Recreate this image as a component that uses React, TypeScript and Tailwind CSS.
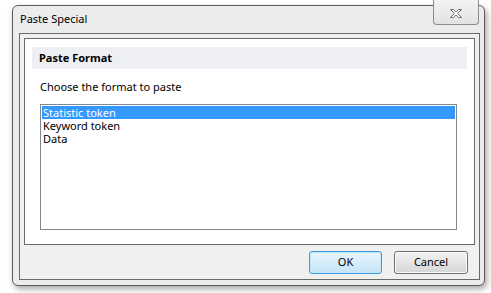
import { FC, useState } from "react";

const items = ["Statistic token", "Keyword token", "Data"];

const CloseGlyph: FC = () => (
  <svg width="14" height="11" viewBox="0 0 14 11">
    <path
      d="M1.5 1.5h3l2.5 2.5 2.5-2.5h3l-4 4 4 4h-3l-2.5-2.5-2.5 2.5h-3l4-4z"
      fill="#ffffff"
      stroke="#6b6f78"
      strokeWidth="1"
      strokeLinejoin="round"
    />
  </svg>
);

const App: FC = () => {
  const [selected, setSelected] = useState(0);

  return (
    <div
      className="h-[293px] w-[491px] bg-white pl-[12px] pt-[5px]"
      style={{ fontFamily: '"Noto Sans", "Open Sans", sans-serif' }}
    >
      <div className="relative flex h-[281px] w-[473px] flex-col rounded-[6px] border border-[#5c5c5c] bg-[#ececec] shadow-[2px_3px_6px_rgba(0,0,0,0.35)]">
        {/* title bar */}
        <div className="flex h-[27px] items-center pb-[1px] pl-[7px] text-[11px] text-black">
          Paste Special
        </div>
        <button className="absolute right-[5px] top-[-6px] flex h-[25px] w-[46px] items-end justify-center rounded-b-[4px] border border-t-0 border-[#8c8c8c] bg-gradient-to-b from-[#f4f4f4] to-[#e2e2e2] pb-[5px]">
          <CloseGlyph />
        </button>

        {/* client frame */}
        <div className="ml-[6px] flex h-[247px] w-[461px] flex-col border border-[#6a6a6a] bg-[#f0f0f0] p-[4px] pb-0">
          <div className="flex h-[207px] flex-col border border-[#6a6a6a] bg-white px-[7px] pt-[8px]">
            <div className="flex h-[22px] items-center bg-[#eeeff3] pl-[7px] text-[11px] font-bold text-black">
              Paste Format
            </div>
            <div className="mt-[10px] h-[15px] pl-[8px] text-[11px] leading-[15px] text-black">
              Choose the format to paste
            </div>
            <div className="ml-[8px] mt-[10px] h-[126px] w-[417px] border border-[#828790] bg-white p-[1px]">
              {items.map((item, i) => (
                <div
                  key={item}
                  onClick={() => setSelected(i)}
                  className={
                    i === selected
                      ? "h-[13px] bg-[#3399ff] pl-[1px] text-[11px] leading-[13px] text-white"
                      : "h-[13px] pl-[1px] text-[11px] leading-[13px] text-black"
                  }
                >
                  {item}
                </div>
              ))}
            </div>
          </div>

          {/* footer */}
          <div className="flex flex-1 items-start justify-end gap-[12px] pr-[7px] pt-[6px]">
            <button className="h-[23px] w-[73px] rounded-[3px] border border-[#3c9be0] bg-gradient-to-b from-[#eaf6fd] to-[#c4e4f6] text-[11px] text-black shadow-[inset_0_0_0_1px_#bfe6fb]">
              OK
            </button>
            <button className="h-[23px] w-[74px] rounded-[3px] border border-[#707070] bg-gradient-to-b from-[#f2f2f2] to-[#d6d6d6] text-[11px] text-black shadow-[inset_0_0_0_1px_#fbfbfb]">
              Cancel
            </button>
          </div>
        </div>
      </div>
    </div>
  );
};

export default App;
